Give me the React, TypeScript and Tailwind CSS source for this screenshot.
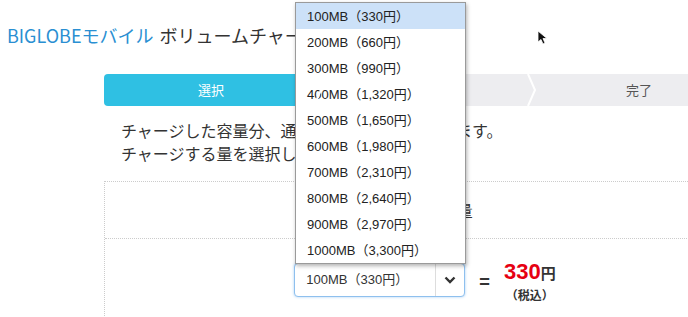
const options = [
  "100MB（330円）",
  "200MB（660円）",
  "300MB（990円）",
  "400MB（1,320円）",
  "500MB（1,650円）",
  "600MB（1,980円）",
  "700MB（2,310円）",
  "800MB（2,640円）",
  "900MB（2,970円）",
  "1000MB（3,300円）",
];

const steps = ["選択", "確認", "完了"];

export default function App() {
  return (
    <div className="relative w-[688px] h-[317px] overflow-hidden bg-white text-[#333] font-['Noto_Sans_CJK_JP',sans-serif]">
      <h1 className="pt-[23px] pl-[7px] text-[18px] leading-[24px] font-normal">
        <span className="text-[#2a8fd2]">BIGLOBEモバイル</span>
        <span className="ml-[6px]">ボリュームチャージ</span>
      </h1>

      {/* steps */}
      <div className="ml-[104px] mt-[27px] flex w-[642px] h-[32px]">
        {steps.map((s, i) => (
          <div
            key={s}
            className={
              "relative flex-1 flex items-center justify-center text-[13px] " +
              (i === 0 ? "bg-[#2fc0e3] text-white rounded-l-[4px]" : "bg-[#ededf0] text-[#555]")
            }
          >
            {s}
            {i < 2 && (
              <svg className="absolute right-[-6px] top-0 z-10" width="12" height="32" viewBox="0 0 12 32">
                <polyline points="2,0 9,16 2,32" fill="none" stroke="white" strokeWidth="2" />
              </svg>
            )}
          </div>
        ))}
      </div>

      <p className="ml-[121px] mt-[13px] text-[16px] leading-[23px]">
        チャージした容量分、通信容量として追加されます。
        <br />
        チャージする量を選択してください。
      </p>

      {/* charge box */}
      <div className="ml-[104px] mt-[16px] w-[642px] border border-dotted border-[#ccc]">
        <div className="h-[57px] flex items-center justify-center text-[16px] border-b border-dotted border-[#ccc]">
          チャージ容量
        </div>
        <div className="flex items-start justify-center pt-[24px] pb-[30px] gap-[14px]">
          <div className="flex w-[171px] h-[34px] rounded-[4px] border border-[#8ec0ee] shadow-[0_0_3px_#a9cff3] bg-white font-['Liberation_Sans','Noto_Sans_CJK_JP',sans-serif] text-[13px]">
            <div className="flex-1 flex items-center pl-[11px]">100MB（330円）</div>
            <div className="w-[29px] border-l border-[#ddd] flex items-center justify-center">
              <svg width="12" height="8" viewBox="0 0 12 8">
                <polyline points="1.5,1.5 6,6 10.5,1.5" fill="none" stroke="#333" strokeWidth="2.4" />
              </svg>
            </div>
          </div>
          <div className="pt-[3px] text-[18px] font-bold leading-[28px]">=</div>
          <div className="flex flex-col items-center -mt-[5px]">
            <div className="leading-[28px]">
              <span className="text-[22px] font-bold text-[#e60012] font-['Liberation_Sans',sans-serif]">330</span>
              <span className="text-[15px] font-bold text-[#333]">円</span>
            </div>
            <div className="text-[12px] font-bold leading-[16px]">（税込）</div>
          </div>
        </div>
      </div>

      {/* open dropdown list */}
      <ul className="absolute left-[295px] top-[2px] w-[171px] bg-white border border-[#9a9a9a] shadow-[1px_2px_4px_rgba(0,0,0,0.3)] font-['Liberation_Sans','Noto_Sans_CJK_JP',sans-serif] text-[13px] text-[#222]">
        {options.map((o, i) => (
          <li
            key={o}
            className={"h-[26px] flex items-center pl-[11px] pt-[2px] " + (i === 0 ? "bg-[#cce1f8]" : "")}
          >
            {o}
          </li>
        ))}
      </ul>

      {/* mouse cursor */}
      <svg className="absolute left-[537px] top-[30px]" width="12" height="16" viewBox="0 0 12 16">
        <path d="M1,1 L1,12 L4,9.5 L6,14 L8,13 L6,8.5 L10,8.5 Z" fill="#111" stroke="white" strokeWidth="0.8" />
      </svg>
    </div>
  );
}
